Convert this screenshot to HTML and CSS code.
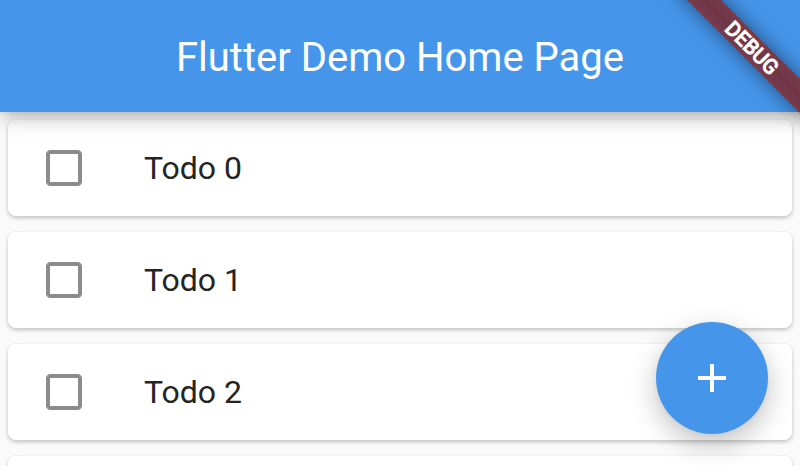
FILE: index.html
```html
<!DOCTYPE html>
<html lang="en">
<head>
<meta charset="utf-8">
<title>Flutter Demo</title>
<link rel="stylesheet" href="styles.css">
</head>
<body>
<div class="app">
  <header class="app-bar"><h1 class="title">Flutter Demo Home Page</h1></header>
  <main class="list">
    <div class="card"><span class="checkbox"></span><span class="label">Todo 0</span></div>
    <div class="card"><span class="checkbox"></span><span class="label">Todo 1</span></div>
    <div class="card"><span class="checkbox"></span><span class="label">Todo 2</span></div>
    <div class="card"></div>
  </main>
  <button class="fab" aria-label="Add">
    <svg width="48" height="48" viewBox="0 0 24 24"><path fill="#fff" d="M19 13h-6v6h-2v-6H5v-2h6V5h2v6h6v2z"/></svg>
  </button>
  <div class="banner">DEBUG</div>
</div>
</body>
</html>
```
FILE: styles.css
```css
* {
  box-sizing: border-box;
}

body {
  margin: 0;
  font-family: Roboto, sans-serif;
}

.app {
  position: relative;
  height: 466px;
  overflow: hidden;
  background: #fafafa;
}

.app-bar {
  position: relative;
  z-index: 1;
  display: flex;
  align-items: center;
  justify-content: center;
  height: 112px;
  padding-top: 4px;
  background: #4596eb;
  box-shadow: 0 8px 18px -2px rgba(0, 0, 0, 0.27), 0 1px 4px rgba(0, 0, 0, 0.06);
}

.title {
  margin: 0;
  color: #fff;
  font-size: 40px;
  font-weight: 400;
  line-height: 48px;
  white-space: nowrap;
}

.list {
  display: flex;
  flex-direction: column;
  gap: 16px;
  padding: 8px;
}

.card {
  display: flex;
  flex: none;
  align-items: center;
  gap: 62px;
  height: 96px;
  padding-left: 38px;
  border-radius: 8px;
  background: #fff;
  box-shadow: 0 2px 4px rgba(0, 0, 0, 0.23);
}

.checkbox {
  width: 36px;
  height: 36px;
  border: 4px solid #8c8c8c;
  border-radius: 4.5px;
}

.label {
  color: #242424;
  font-size: 32px;
  line-height: 40px;
}

.fab {
  position: absolute;
  z-index: 2;
  right: 32px;
  bottom: 32px;
  display: flex;
  align-items: center;
  justify-content: center;
  width: 112px;
  height: 112px;
  padding: 0;
  border: 0;
  border-radius: 50%;
  background: #4596eb;
  box-shadow: 0 10px 28px rgba(0, 0, 0, 0.24), 0 1px 6px rgba(0, 0, 0, 0.04);
}

.banner {
  position: absolute;
  z-index: 3;
  top: 36px;
  left: 652px;
  width: 200px;
  height: 24px;
  transform: rotate(45deg);
  background: linear-gradient(#773b4e, #703545 50%, #773b4e);
  color: #fff;
  font-size: 20.4px;
  font-weight: 400;
  -webkit-text-stroke: 1.2px #fff;
  letter-spacing: 0.2px;
  line-height: 24px;
  text-align: center;
  box-shadow: 0 0 20px rgba(0, 0, 0, 0.5);
}
```
